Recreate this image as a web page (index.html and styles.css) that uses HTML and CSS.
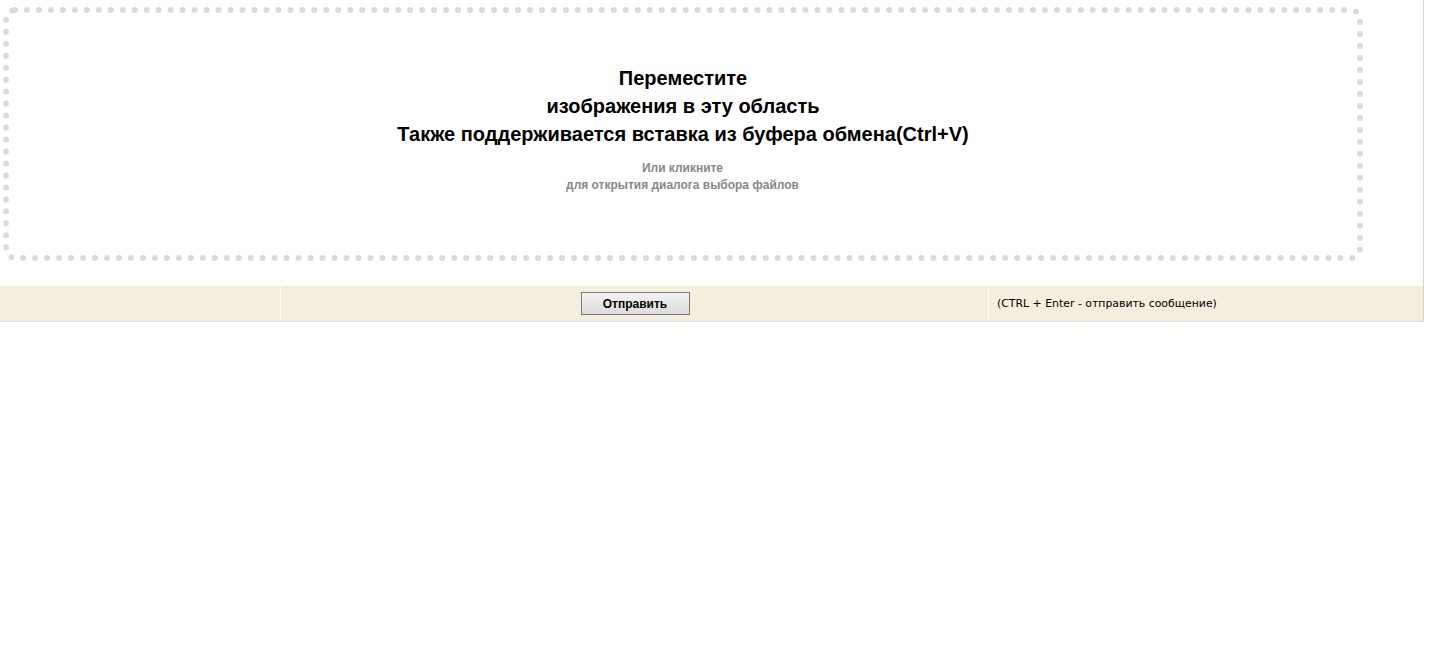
FILE: index.html
```html
<!DOCTYPE html>
<html>
<head>
<meta charset="UTF-8">
<title>Загрузка изображений</title>
<link rel="stylesheet" href="styles.css">
</head>
<body>
<div class="wrap">
	<div class="drop_zone">
		<div class="drop_main">
			Переместите<br>
			изображения в эту область<br>
			Также поддерживается вставка из буфера обмена(Ctrl+V)
		</div>
		<div class="drop_sub">
			Или кликните<br>
			для открытия диалога выбора файлов
		</div>
	</div>
	<div class="bar">
		<div class="cell cell_left"></div>
		<div class="cell cell_mid">
			<input type="button" class="btn_send" value="Отправить" />
		</div>
		<div class="cell cell_right">(CTRL + Enter - отправить сообщение)</div>
	</div>
</div>
</body>
</html>
```

FILE: styles.css
```css
body {
	margin: 0;
	background-color: #FFFFFF;
	font-family: "Liberation Sans", Arial, sans-serif;
}
.wrap {
	width: 1423px;
	border-right: 1px solid #D6D6D6;
	padding-top: 7px;
}
.drop_zone {
	width: 1348px;
	height: 230px;
	margin-left: 3px;
	border: 6px dotted #DADADA;
	border-radius: 12px;
	display: flex;
	flex-direction: column;
	justify-content: center;
	align-items: center;
	text-align: center;
	padding-bottom: 12px;
	box-sizing: content-box;
}
.drop_main {
	font-size: 20px;
	font-weight: bold;
	line-height: 28px;
	color: #000000;
}
.drop_sub {
	margin-top: 11px;
	font-size: 13px;
	font-weight: bold;
	line-height: 17px;
	color: #888888;
	transform: scaleX(0.92);
}
.bar {
	display: flex;
	height: 35px;
	margin-top: 25px;
	background-color: #F4EEDE;
	border-bottom: 1px solid #DCDCDC;
}
.cell {
	display: flex;
	align-items: center;
}
.cell_left {
	width: 280px;
	border-right: 1px solid #FFFFFF;
}
.cell_mid {
	width: 707px;
	justify-content: center;
	border-right: 1px solid #FFFFFF;
}
.cell_right {
	flex: 1;
	padding-left: 8px;
	font-family: "DejaVu Sans", Tahoma, sans-serif;
	font-size: 10.9px;
	color: #000000;
}
.btn_send {
	width: 109px;
	height: 23px;
	margin: 0 0 0 1px;
	border: 1px solid #7A7A7A;
	background: linear-gradient(#F2F2F2, #DCDCDC);
	font-family: "Liberation Sans", Arial, sans-serif;
	font-size: 12px;
	font-weight: bold;
	color: #000000;
	padding: 0;
}
```
